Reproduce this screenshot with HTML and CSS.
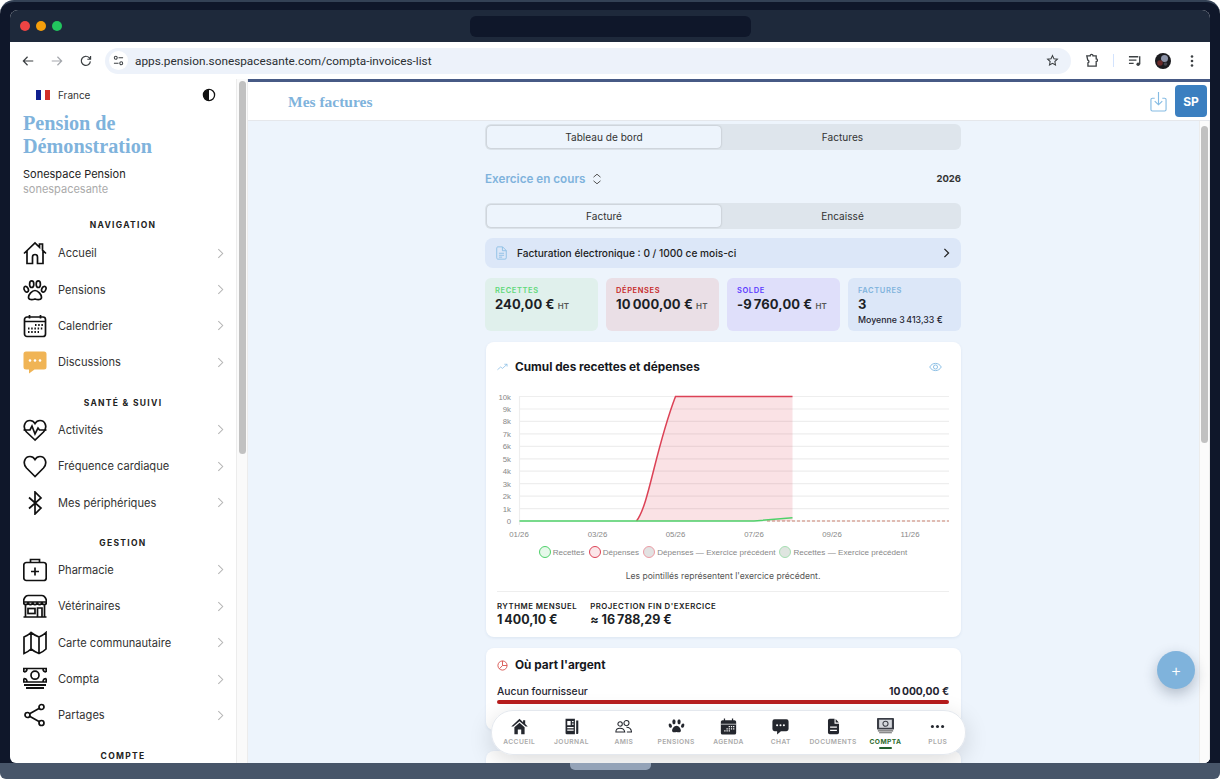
FILE: index.html
```html
<!DOCTYPE html>
<html lang="fr">
<head>
  <meta charset="UTF-8">
  <title>Mes factures</title>
  <link rel="stylesheet" href="styles.css">
</head>
<body>
  <div class="laptop">
    <div class="screen">
      <div class="titlebar">
        <span class="light red"></span>
        <span class="light amber"></span>
        <span class="light green"></span>
        <div class="notch"></div>
      </div>

      <div class="toolbar">
        <svg class="tb-icon" viewBox="0 0 16 16"><path d="M14 8H3M7.500 3.200 2.700 8l4.800 4.800"/></svg>
        <svg class="tb-icon off" viewBox="0 0 16 16"><path d="M2 8h11M8.500 3.200 13.300 8l-4.800 4.800"/></svg>
        <svg class="tb-icon" viewBox="0 0 16 16"><path d="M13 8.400A5.200 5.200 0 1 1 11.600 4.200L13.200 6M13.200 2.200V6H9.500"/></svg>
        <div class="omnibox">
          <span class="tune">
            <svg viewBox="0 0 12 12"><circle cx="3" cy="3" r="1.600"/><path d="M6 3h5M1 9h5"/><circle cx="9" cy="9" r="1.600"/></svg>
          </span>
          <span class="url">apps.pension.sonespacesante.com/compta-invoices-list</span>
          <svg class="star" viewBox="0 0 16 16"><path d="m8 2 1.800 3.900 4.200.5-3.100 2.900.8 4.200L8 11.400l-3.700 2.100.8-4.200L2 6.400l4.200-.5z"/></svg>
        </div>
        <svg class="tb-icon ext" viewBox="0 0 16 16"><path d="M3 3h3.600c0-2 3-2 3 0H13v3.200c1.800 0 1.800 3 0 3V14H4.200V10.500c1.400 0 1.400-3-.2-3z"/></svg>
        <span class="tb-sep"></span>
        <svg class="tb-icon queue" viewBox="0 0 16 16"><path d="M1 4h10M1 7.500h8M1 11h5M12.500 3.500V12"/><circle class="solid" cx="10.800" cy="12" r="1.800"/></svg>
        <svg class="avatar" viewBox="0 0 16 16"><circle cx="8" cy="8" r="8" fill="#1b1b1f"/><circle cx="9.500" cy="5.500" r="3.500" fill="#8c93a8"/><circle cx="5" cy="10" r="2.800" fill="#6a2b2b"/><circle cx="10.500" cy="11" r="1.800" fill="#45464f"/></svg>
        <svg class="dots" viewBox="0 0 4 16"><circle cx="2" cy="3.500" r="1.300"/><circle cx="2" cy="8" r="1.300"/><circle cx="2" cy="12.500" r="1.300"/></svg>
      </div>

      <div class="app">
        <aside class="sidebar">
          <div class="side-inner">
            <div class="locale">
              <span class="flag"><i class="f-blue"></i><i class="f-white"></i><i class="f-red"></i></span>
              <span class="locale-name">France</span>
              <svg class="contrast" viewBox="0 0 14 14"><circle cx="7" cy="7" r="5.600"/><path class="solid" d="M7 1.400a5.600 5.600 0 0 0 0 11.200z"/></svg>
            </div>
            <h2 class="brand">Pension de Démonstration</h2>
            <div class="owner">Sonespace Pension</div>
            <div class="owner-sub">sonespacesante</div>

            <div class="side-title first">NAVIGATION</div>
            <a class="side-item">
              <svg class="side-icon" viewBox="0 0 24 24"><path d="M1 12.500 12 2l4.500 4.300V3h3v6.200l3.500 3.300M4 10v12.500h5.500v-6.500a2.500 2.500 0 0 1 5 0v6.500H20V10"/></svg>
              <span>Accueil</span><svg class="chev" viewBox="0 0 8 12"><path d="m1.500 1 5 5-5 5"/></svg>
            </a>
            <a class="side-item">
              <svg class="side-icon" viewBox="0 0 24 24"><path d="M12 12.500c-3 0-6.500 4-6.500 6.700 0 2.800 3.500 2.700 6.500 1.800 3 .9 6.500 1 6.500-1.800 0-2.700-3.500-6.700-6.500-6.700z"/><ellipse cx="8.700" cy="6.200" rx="2.100" ry="3.300"/><ellipse cx="15.300" cy="6.200" rx="2.100" ry="3.300"/><ellipse cx="3.200" cy="11.200" rx="2" ry="3" transform="rotate(-24 3.200 11.200)"/><ellipse cx="20.800" cy="11.200" rx="2" ry="3" transform="rotate(24 20.800 11.200)"/></svg>
              <span>Pensions</span><svg class="chev" viewBox="0 0 8 12"><path d="m1.500 1 5 5-5 5"/></svg>
            </a>
            <a class="side-item">
              <svg class="side-icon" viewBox="0 0 24 24"><rect x="1.500" y="3" width="21" height="19.500" rx="2.500"/><path d="M1.500 7.500h21M6.500 1v3.500M17.500 1v3.500"/><path class="dotted" d="M12 11h8.500M5 14.500h15.500M5 18h11"/></svg>
              <span>Calendrier</span><svg class="chev" viewBox="0 0 8 12"><path d="m1.500 1 5 5-5 5"/></svg>
            </a>
            <a class="side-item">
              <svg class="side-icon" viewBox="0 0 24 24"><path class="chat-fill" d="M3 1.500h18A2.500 2.500 0 0 1 23.500 4v13a2.500 2.500 0 0 1-2.500 2.500H11.500L6 23.500v-4H3A2.500 2.500 0 0 1 .5 17V4A2.500 2.500 0 0 1 3 1.500z"/><circle class="chat-dot" cx="7" cy="10.500" r="1.300"/><circle class="chat-dot" cx="12" cy="10.500" r="1.300"/><circle class="chat-dot" cx="17" cy="10.500" r="1.300"/></svg>
              <span>Discussions</span><svg class="chev" viewBox="0 0 8 12"><path d="m1.500 1 5 5-5 5"/></svg>
            </a>

            <div class="side-title">SANTÉ &amp; SUIVI</div>
            <a class="side-item">
              <svg class="side-icon" viewBox="0 0 24 24"><path d="M12 22 3.500 14C-1 9 2 2.500 7 2.500c2.200 0 3.800 1 5 3 1.200-2 2.800-3 5-3 5 0 8 6.500 3.500 11.500z"/><path d="M.5 12h6.500l2-4 3 8 3-6 1.500 2h7"/></svg>
              <span>Activités</span><svg class="chev" viewBox="0 0 8 12"><path d="m1.500 1 5 5-5 5"/></svg>
            </a>
            <a class="side-item">
              <svg class="side-icon" viewBox="0 0 24 24"><path d="M12 22.500 3.500 14C-1 9 2 2.500 7 2.500c2.200 0 3.800 1 5 3 1.200-2 2.800-3 5-3 5 0 8 6.500 3.500 11.500z"/></svg>
              <span>Fréquence cardiaque</span><svg class="chev" viewBox="0 0 8 12"><path d="m1.500 1 5 5-5 5"/></svg>
            </a>
            <a class="side-item">
              <svg class="side-icon" viewBox="0 0 24 24"><path d="M6 6.500 18 17l-6 6V1l6 6L6 17.500"/></svg>
              <span>Mes périphériques</span><svg class="chev" viewBox="0 0 8 12"><path d="m1.500 1 5 5-5 5"/></svg>
            </a>

            <div class="side-title">GESTION</div>
            <a class="side-item">
              <svg class="side-icon" viewBox="0 0 24 24"><rect x=".8" y="4.500" width="22.400" height="18" rx="2.500"/><path d="M7.500 4.500V1.500h9v3M12 9.500v8M8 13.500h8"/></svg>
              <span>Pharmacie</span><svg class="chev" viewBox="0 0 8 12"><path d="m1.500 1 5 5-5 5"/></svg>
            </a>
            <a class="side-item">
              <svg class="side-icon" viewBox="0 0 24 24"><path d="M5 1.500h14c2.500 0 4.500 3 4.500 6.500h-23C.5 4.500 2.500 1.500 5 1.500zM.5 8c0 3.500 4.600 3.500 4.600 0 0 3.500 4.600 3.500 4.600 0 0 3.500 4.600 3.500 4.600 0 0 3.500 4.600 3.500 4.600 0 0 3.500 4.600 3.500 4.600 0M2.500 11.500v11M21.500 11.500v11M.5 23h23"/><rect x="5" y="14.500" width="7" height="5"/><path d="M14.500 23v-9h4.500v9"/></svg>
              <span>Vétérinaires</span><svg class="chev" viewBox="0 0 8 12"><path d="m1.500 1 5 5-5 5"/></svg>
            </a>
            <a class="side-item">
              <svg class="side-icon" viewBox="0 0 24 24"><path d="M1 6c2.500-1 5-2.500 7-4.500 2.500 2 5.500 3.500 8 4.500 2.500-1 5-2.500 7-4.500V18c-2 2-4.500 3.500-7 4.500-2.500-1-5.500-2.500-8-4.500-2 2-4.500 3.500-7 4.500zM8 1.500V18M16 6v16.500"/></svg>
              <span>Carte communautaire</span><svg class="chev" viewBox="0 0 8 12"><path d="m1.500 1 5 5-5 5"/></svg>
            </a>
            <a class="side-item">
              <svg class="side-icon" viewBox="0 0 24 24"><path d="M4 1.500H.8V5M20 1.500h3.200V5M4 15H.8v-3.500M20 15h3.200v-3.500M4 1.500c0 2-1 3.500-3.200 3.500M20 1.500c0 2 1 3.500 3.200 3.500M4 15c0-2-1-3.500-3.200-3.500M20 15c0-2 1-3.500 3.200-3.500M4 1.500h16M4 15h16"/><circle cx="12" cy="8.200" r="4"/><path class="thick" d="M1 18h22M3 21h18"/></svg>
              <span>Compta</span><svg class="chev" viewBox="0 0 8 12"><path d="m1.500 1 5 5-5 5"/></svg>
            </a>
            <a class="side-item">
              <svg class="side-icon" viewBox="0 0 24 24"><circle cx="18.500" cy="4" r="2.500"/><circle cx="4.500" cy="12" r="2.500"/><circle cx="18.500" cy="20" r="2.500"/><path d="M16.400 5.300 6.600 10.700M6.600 13.300l9.800 5.400"/></svg>
              <span>Partages</span><svg class="chev" viewBox="0 0 8 12"><path d="m1.500 1 5 5-5 5"/></svg>
            </a>

            <div class="side-title">COMPTE</div>
          </div>
          <div class="scroll side-scroll"><span class="thumb"></span></div>
        </aside>

        <main class="main">
          <header class="topbar">
            <h1>Mes factures</h1>
            <svg class="dl" viewBox="0 0 18 22"><path d="M5 7.500H2.500A1.500 1.500 0 0 0 1 9v10.500A1.500 1.500 0 0 0 2.500 21h13a1.500 1.500 0 0 0 1.500-1.500V9a1.500 1.500 0 0 0-1.500-1.500H13M9 1v13M5 10.500l4 4 4-4"/></svg>
            <button class="sp">SP</button>
          </header>

          <div class="main-body">
            <div class="content">
              <div class="column">
                <div class="seg">
                  <span class="seg-on">Tableau de bord</span>
                  <span>Factures</span>
                </div>

                <div class="period">
                  <span class="period-name">Exercice en cours</span>
                  <svg class="updown" viewBox="0 0 10 12"><path d="m1.500 4.200 3.500-3 3.500 3M1.500 7.800l3.500 3 3.500-3"/></svg>
                  <span class="period-year">2026</span>
                </div>

                <div class="seg">
                  <span class="seg-on">Facturé</span>
                  <span>Encaissé</span>
                </div>

                <div class="einvoice">
                  <svg class="doc" viewBox="0 0 12 15"><path d="M1.800.8h5.400l4 4v8a1.400 1.400 0 0 1-1.400 1.400H1.800A1.400 1.400 0 0 1 .8 12.800V2.200A1.400 1.400 0 0 1 1.800.8zM7 1v4h4M3.200 7.800h5.600M3.200 10h5.600M3.200 12h3.500"/></svg>
                  <span>Facturation électronique : 0 / 1000 ce mois-ci</span>
                  <svg class="einvoice-chev" viewBox="0 0 8 12"><path d="m1.500 1 5 5-5 5"/></svg>
                </div>

                <div class="kpis">
                  <div class="kpi k-green">
                    <div class="kpi-label">RECETTES</div>
                    <div class="kpi-value">240,00 € <small>HT</small></div>
                  </div>
                  <div class="kpi k-red">
                    <div class="kpi-label">DÉPENSES</div>
                    <div class="kpi-value">10&#8239;000,00 € <small>HT</small></div>
                  </div>
                  <div class="kpi k-violet">
                    <div class="kpi-label">SOLDE</div>
                    <div class="kpi-value">-9&#8239;760,00 € <small>HT</small></div>
                  </div>
                  <div class="kpi k-blue">
                    <div class="kpi-label">FACTURES</div>
                    <div class="kpi-value">3</div>
                    <div class="kpi-note">Moyenne 3&#8239;413,33 €</div>
                  </div>
                </div>

                <section class="card chart-card">
                  <div class="card-head">
                    <svg class="head-icon trend" viewBox="0 0 12 8"><path d="M.5 7 4 4l2 1.500L11 1M8 1h3v2.500"/></svg>
                    <h3>Cumul des recettes et dépenses</h3>
                    <svg class="eye" viewBox="0 0 14 10"><path d="M.8 5C3.500-.2 10.500-.2 13.200 5 10.500 10.200 3.500 10.200.8 5z"/><circle cx="7" cy="5" r="2.200"/></svg>
                  </div>

                  <svg class="chart" viewBox="0 0 452 155" width="452" height="155">
                    <g class="grid">
                      <path d="M22 6.500h430M22 19h430M22 31.400h430M22 43.900h430M22 56.300h430M22 68.800h430M22 81.200h430M22 93.700h430M22 106.100h430M22 118.600h430M22 131h430"/>
                      <path d="M22.500 6v129"/>
                    </g>
                    <g class="y-labels">
                      <text x="14" y="9.500">10k</text>
                      <text x="14" y="22">9k</text>
                      <text x="14" y="34.400">8k</text>
                      <text x="14" y="46.900">7k</text>
                      <text x="14" y="59.300">6k</text>
                      <text x="14" y="71.800">5k</text>
                      <text x="14" y="84.200">4k</text>
                      <text x="14" y="96.700">3k</text>
                      <text x="14" y="109.100">2k</text>
                      <text x="14" y="121.600">1k</text>
                      <text x="14" y="134">0</text>
                    </g>
                    <path class="area" d="M139.500 131C152 115 158 60 178.500 6.500H295.500V131z"/>
                    <path class="line-red" d="M139.500 131C152 115 158 60 178.500 6.500H295.500"/>
                    <path class="line-prev" d="M270 131H452"/>
                    <path class="line-green" d="M22.500 131H257L295.500 127.800"/>
                    <g class="x-labels">
                      <text x="22" y="147">01/26</text>
                      <text x="100.500" y="147">03/26</text>
                      <text x="178.500" y="147">05/26</text>
                      <text x="257" y="147">07/26</text>
                      <text x="335" y="147">09/26</text>
                      <text x="413" y="147">11/26</text>
                    </g>
                  </svg>

                  <div class="legend">
                    <span class="leg"><i class="dot d-green"></i>Recettes</span>
                    <span class="leg"><i class="dot d-red"></i>Dépenses</span>
                    <span class="leg"><i class="dot d-red-prev"></i>Dépenses — Exercice précédent</span>
                    <span class="leg"><i class="dot d-green-prev"></i>Recettes — Exercice précédent</span>
                  </div>
                  <p class="chart-note">Les pointillés représentent l'exercice précédent.</p>

                  <div class="stats">
                    <div>
                      <div class="stat-label">RYTHME MENSUEL</div>
                      <div class="stat-value">1&#8239;400,10 €</div>
                    </div>
                    <div>
                      <div class="stat-label">PROJECTION FIN D'EXERCICE</div>
                      <div class="stat-value">≈ 16&#8239;788,29 €</div>
                    </div>
                  </div>
                </section>

                <section class="card money-card">
                  <div class="card-head">
                    <svg class="head-icon pie" viewBox="0 0 12 12"><circle cx="6" cy="6" r="5"/><path d="M6 1v5l-3.400 3.600M6 6h5"/></svg>
                    <h3>Où part l'argent</h3>
                  </div>
                  <div class="money-row">
                    <span>Aucun fournisseur</span>
                    <b>10&#8239;000,00 €</b>
                  </div>
                  <div class="money-bar"></div>
                </section>

                <section class="card next-card"></section>
              </div>
            </div>
            <div class="scroll main-scroll"><span class="thumb"></span></div>
          </div>

          <nav class="bottom-nav">
            <a class="nav-item">
              <svg viewBox="0 0 20 20"><path class="solid" d="M10 1 .3 10h2.400L10 3.700l7.300 6.300h2.400l-3-2.800V2.500h-2.500v2.400z"/><path class="solid" d="m4 10.800 6-5.200 6 5.200v8.200h-4v-5.500H8V19H4z"/></svg>
              <span>ACCUEIL</span>
            </a>
            <a class="nav-item">
              <svg viewBox="0 0 20 20"><path class="solid" fill-rule="evenodd" d="M3 1h11v18H4.500A1.500 1.500 0 0 1 3 17.500zM5 3.500v5h4v-5zM10.500 3.500V5H12.500V3.500zM10.500 6.500V8H12.500V6.500zM5 10.500V12h7.500v-1.500zM5 13.500V15h7.500v-1.500z"/><path class="solid" d="M15.500 3H18v14.500a1.500 1.500 0 0 1-2.500 1z"/></svg>
              <span>JOURNAL</span>
            </a>
            <a class="nav-item">
              <svg class="nav-outline" viewBox="0 0 20 20"><circle cx="6" cy="7" r="2.600"/><circle cx="13.500" cy="6" r="3"/><path d="M1 16.500c0-6 9.500-6 10.500 0zM13.500 11c3 0 5.500 1.800 6 5.500h-5.500"/></svg>
              <span>AMIS</span>
            </a>
            <a class="nav-item">
              <svg viewBox="0 0 20 20"><path class="solid" d="M10 9c-2.800 0-5.200 3.600-5.200 5.800 0 2.600 3 2.300 5.200 1.600 2.200.7 5.200 1 5.200-1.600C15.200 12.600 12.800 9 10 9z"/><ellipse class="solid" cx="7" cy="4.500" rx="1.900" ry="3"/><ellipse class="solid" cx="13" cy="4.500" rx="1.900" ry="3"/><ellipse class="solid" cx="2.700" cy="9" rx="1.800" ry="2.600" transform="rotate(-22 2.700 9)"/><ellipse class="solid" cx="17.300" cy="9" rx="1.800" ry="2.600" transform="rotate(22 17.300 9)"/></svg>
              <span>PENSIONS</span>
            </a>
            <a class="nav-item">
              <svg viewBox="0 0 20 20"><path class="solid" d="M4.500.5H6V2.500h8V.5h1.500V2.500h1.500A2 2 0 0 1 19 4.500v13a2 2 0 0 1-2 2H3a2 2 0 0 1-2-2v-13a2 2 0 0 1 2-2h1.500z"/><path class="hole-line thin" d="M1 7.300h18"/><path class="hole-sq" d="M10.200 9.500h1.500V11h-1.500zM12.800 9.500h1.500V11h-1.500zM15.400 9.500h1.500V11h-1.500zM7.600 12h1.500v1.500H7.600zM10.200 12h1.500v1.500h-1.500zM12.800 12h1.500v1.500h-1.500zM15.400 12h1.500v1.500h-1.500zM5 14.500h1.500V16H5zM7.600 14.500h1.500V16H7.600zM10.200 14.500h1.500V16h-1.500z"/></svg>
              <span>AGENDA</span>
            </a>
            <a class="nav-item">
              <svg viewBox="0 0 20 20"><path class="solid" d="M3 1.500h14a2.500 2.500 0 0 1 2.500 2.500v9a2.500 2.500 0 0 1-2.500 2.500h-6.500L6 19.500v-4H3A2.500 2.500 0 0 1 .5 13V4A2.500 2.500 0 0 1 3 1.500z"/><circle class="hole" cx="6" cy="8.500" r="1.200"/><circle class="hole" cx="10" cy="8.500" r="1.200"/><circle class="hole" cx="14" cy="8.500" r="1.200"/></svg>
              <span>CHAT</span>
            </a>
            <a class="nav-item">
              <svg viewBox="0 0 20 20"><path class="solid" d="M5.500 1h5.700v5.800h5.300V17a2 2 0 0 1-2 2h-9a2 2 0 0 1-2-2V3a2 2 0 0 1 2-2zM12.500 1.300l3.800 4.100h-3.800z"/><path class="hole-line" d="M6 10.800h8M6 14.500h8"/></svg>
              <span>DOCUMENTS</span>
            </a>
            <a class="nav-item on">
              <svg class="cash" viewBox="0 0 20 20"><rect class="solid" x="0" y="0" width="20" height="13.500" rx="1"/><rect class="cash-in" x="2.500" y="2" width="15" height="9.500"/><circle class="cash-ring" cx="10" cy="6.800" r="3"/><path class="cash-low" d="M1 15.200h18M2.500 17.400h15"/></svg>
              <span>COMPTA</span>
            </a>
            <a class="nav-item">
              <svg viewBox="0 0 20 20"><circle class="solid" cx="4" cy="10" r="1.800"/><circle class="solid" cx="10" cy="10" r="1.800"/><circle class="solid" cx="16" cy="10" r="1.800"/></svg>
              <span>PLUS</span>
            </a>
          </nav>

          <button class="fab">+</button>
        </main>
      </div>
    </div>
  </div>
  <div class="base"><span class="handle"></span></div>
</body>
</html>
```

FILE: styles.css
```css
* {
  box-sizing: border-box;
  margin: 0;
  padding: 0;
}

html, body {
  height: 100%;
  background: #fff;
  overflow: hidden;
  font-family: 'Inter', 'Liberation Sans', sans-serif;
  color: #1f2430;
}

svg {
  fill: none;
  stroke: currentColor;
  flex-shrink: 0;
}

.solid {
  fill: currentColor;
  stroke: none;
}

/* laptop frame */
.laptop {
  height: 763px;
  background: #0f172a;
  border-top: 2px solid #334155;
  border-radius: 14px 14px 0 0;
  padding: 8px 10px 0;
}

.screen {
  height: 100%;
  display: flex;
  flex-direction: column;
  border-radius: 8px 8px 6px 6px;
  overflow: hidden;
  background: #fff;
}

.base {
  height: 16px;
  background: #475569;
  border-radius: 0 0 6px 6px;
  display: flex;
  justify-content: center;
}

.handle {
  width: 81px;
  height: 7px;
  background: #94a3b8;
  border-radius: 0 0 5px 5px;
}

.titlebar {
  height: 32px;
  background: #1e293b;
  display: flex;
  align-items: center;
  gap: 6px;
  padding: 0 0 0 10px;
  position: relative;
}

.light {
  width: 10px;
  height: 10px;
  border-radius: 50%;
}

.red { background: #ef4444; }
.amber { background: #f59e0b; }
.green { background: #22c55e; }

.notch {
  position: absolute;
  left: 460px;
  top: 6px;
  width: 281px;
  height: 21px;
  background: #0f172a;
  border-radius: 6px;
}

/* browser toolbar */
.toolbar {
  height: 37px;
  background: #fff;
  display: flex;
  align-items: center;
  padding: 0 0 0 11px;
  color: #3c4043;
}

.tb-icon {
  width: 14px;
  height: 14px;
  margin-right: 15px;
  stroke-width: 1.400;
}

.tb-icon.off {
  color: #a5a8ad;
}

.omnibox {
  width: 966px;
  height: 26px;
  margin-left: -3px;
  background: #edf2fa;
  border-radius: 13px;
  display: flex;
  align-items: center;
  padding: 0 12px 0 4px;
}

.tune {
  width: 19px;
  height: 19px;
  border-radius: 50%;
  background: #fff;
  display: flex;
  align-items: center;
  justify-content: center;
}

.tune svg {
  width: 11px;
  height: 11px;
  stroke-width: 1.100;
}

.url {
  margin-left: 7px;
  font-family: 'Roboto', sans-serif;
  font-size: 11.800px;
  color: #2b2f33;
  flex: 1;
}

.star {
  width: 13px;
  height: 13px;
  stroke-width: 1.300;
}

.tb-icon.ext {
  margin: 0 14px 0 13px;
  width: 15px;
  height: 15px;
}

.tb-sep {
  width: 1px;
  height: 13px;
  background: #d3e3fd;
  margin-right: 14px;
}

.tb-icon.queue {
  width: 15px;
  height: 15px;
  margin-right: 12px;
}

.avatar {
  width: 16px;
  height: 16px;
  stroke: none;
}

.dots {
  width: 4px;
  height: 16px;
  margin-left: 19px;
  fill: #3c4043;
  stroke: none;
}

/* app */
.app {
  flex: 1;
  min-height: 0;
  display: flex;
}

.sidebar {
  width: 238px;
  display: flex;
  overflow: hidden;
}

.side-inner {
  width: 226px;
  padding: 9px 10px 0 13px;
}

.scroll {
  width: 12px;
  flex-shrink: 0;
  background: #fafafa;
  border-left: 1px solid #ececec;
  border-right: 1px solid #ececec;
}

.thumb {
  display: block;
  width: 7px;
  background: #c1c1c1;
  border-radius: 4px;
}

.side-scroll .thumb {
  height: 373px;
  margin: 2px 0 0 2px;
}

.locale {
  display: flex;
  align-items: center;
  height: 14px;
  padding-left: 13px;
}

.flag {
  display: flex;
  width: 14px;
  height: 10px;
}

.flag i {
  flex: 1;
}

.f-blue { background: #10208f; }
.f-white { background: #fff; }
.f-red { background: #d22f27; }

.locale-name {
  font-size: 10px;
  margin-left: 8px;
  color: #333;
  flex: 1;
}

.contrast {
  width: 14px;
  height: 14px;
  margin-right: 10px;
  stroke-width: 1.300;
  color: #111;
}

.brand {
  font-family: 'Liberation Serif', serif;
  font-size: 20.200px;
  line-height: 23px;
  color: #7fb3dc;
  margin-top: 10px;
  width: 150px;
}

.owner {
  font-size: 11px;
  line-height: 15px;
  margin-top: 9px;
  color: #222;
}

.owner-sub {
  font-size: 11px;
  line-height: 14px;
  color: #aaa;
}

.side-title {
  font-size: 8.500px;
  font-weight: 700;
  letter-spacing: 1.300px;
  text-align: center;
  line-height: 11px;
  padding: 17px 3px 3px 0;
  color: #222;
}

.side-title.first {
  padding: 24px 3px 4px 0;
}

.side-item {
  display: flex;
  align-items: center;
  height: 36.400px;
  font-size: 11.100px;
  color: #333;
}

.side-icon {
  width: 24px;
  height: 24px;
  margin-right: 11px;
  color: #111;
  stroke-width: 1.700;
}

.side-item span {
  flex: 1;
}

.chev {
  width: 7px;
  height: 11px;
  margin-right: 2px;
  color: #b5b5b5;
  stroke-width: 1.200;
}

.dotted {
  stroke-width: 2;
  stroke-dasharray: 1.500 1.700;
}

.thick {
  stroke-width: 2;
}

.chat-fill {
  fill: #f0b455;
  stroke: none;
}

.chat-dot {
  fill: #fff;
  stroke: none;
}

/* main */
.main {
  flex: 1;
  min-width: 0;
  position: relative;
  display: flex;
  flex-direction: column;
  border-top: 3px solid #475a85;
  background: #edf4fc;
}

.topbar {
  height: 39px;
  background: #fff;
  border-bottom: 1px solid #e5e7eb;
  display: flex;
  align-items: center;
  padding: 0 3px 0 40px;
}

.topbar h1 {
  font-family: 'Liberation Serif', serif;
  font-size: 15.500px;
  padding-top: 1px;
  color: #7fb3dc;
  flex: 1;
}

.dl {
  width: 17px;
  height: 21px;
  color: #85bbe3;
  stroke-width: 1.200;
  margin-right: 8px;
}

.sp {
  width: 32px;
  height: 32px;
  border: none;
  border-radius: 4px;
  background: #3b7fc0;
  color: #fff;
  font-family: 'Inter', sans-serif;
  font-size: 12px;
  font-weight: 700;
}

.main-body {
  flex: 1;
  min-height: 0;
  display: flex;
}

.content {
  flex: 1;
  overflow: hidden;
  padding-top: 3px;
}

.main-scroll .thumb {
  height: 317px;
  margin: 5px 0 0 1px;
}

.main-scroll {
  width: 11px;
  background: #fbfbfb;
}

.column {
  width: 476px;
  margin-left: 237px;
}

.seg {
  height: 26px;
  padding: 2px 0 2px 2px;
  background: #dee5ec;
  border-radius: 6px;
  display: grid;
  grid-template-columns: 234px 1fr;
  font-size: 10.100px;
  color: #333;
}

.seg span {
  display: flex;
  align-items: center;
  justify-content: center;
  padding-left: 3px;
  border-radius: 4px;
}

.seg .seg-on {
  padding-left: 0;
  background: #edf4fc;
  box-shadow: 0 0 2px rgba(0, 0, 0, 0.25);
}

.period {
  height: 53px;
  padding-top: 4px;
  display: flex;
  align-items: center;
}

.period-name {
  font-size: 11.700px;
  font-weight: 600;
  color: #7fb3dc;
}

.updown {
  width: 10px;
  height: 12px;
  margin-left: 7px;
  color: #555;
  stroke-width: 1;
}

.period-year {
  margin-left: auto;
  font-size: 9.500px;
  font-weight: 700;
  color: #333;
}

.einvoice {
  height: 30px;
  margin-top: 9px;
  background: #dce7f8;
  border-radius: 8px;
  display: flex;
  align-items: center;
  padding: 0 11px;
  font-size: 10.150px;
  font-weight: 500;
  color: #222;
}

.doc {
  width: 11px;
  height: 14px;
  margin-right: 10px;
  color: #85bbe3;
  stroke-width: .9;
}

.einvoice span {
  flex: 1;
}

.einvoice-chev {
  width: 7px;
  height: 10px;
  color: #222;
  stroke-width: 1.500;
}

.kpis {
  display: grid;
  grid-template-columns: repeat(4, 1fr);
  gap: 8px;
  margin-top: 10px;
}

.kpi {
  height: 53px;
  border-radius: 6px;
  padding: 8px 10px;
}

.k-green { background: #e0f0ec; }
.k-red { background: #eadfe6; }
.k-violet { background: #dfdffa; }
.k-blue { background: #dce7f8; }

.kpi-label {
  font-size: 7.500px;
  line-height: 9px;
  font-weight: 600;
  letter-spacing: .6px;
}

.k-green .kpi-label { color: #5fd97a; }
.k-red .kpi-label { color: #c62828; }
.k-violet .kpi-label { color: #5b3bff; }
.k-blue .kpi-label { color: #7fb3dc; }

.kpi-value {
  font-size: 13px;
  line-height: 16px;
  margin-top: 1px;
  font-weight: 700;
  letter-spacing: .1px;
  color: #1c1f26;
  white-space: nowrap;
}

.kpi-value small {
  font-size: 8px;
  font-weight: 600;
  color: #555;
}

.kpi-note {
  font-size: 8.800px;
  font-weight: 500;
  margin-top: 2px;
  white-space: nowrap;
}

.card {
  background: #fff;
  border-radius: 8px;
  box-shadow: 0 1px 3px rgba(30, 60, 110, 0.08);
}

.chart-card {
  height: 295px;
  margin: 11px 0 0 1px;
  padding: 0 12px 0 11px;
}

.card-head {
  display: flex;
  align-items: center;
  height: 50px;
}

.card-head h3 {
  font-size: 11.800px;
  font-weight: 700;
  color: #16181d;
  flex: 1;
}

.head-icon {
  width: 11px;
  height: 8px;
  margin-right: 7px;
  stroke-width: .8;
}

.trend {
  color: #85bbe3;
}

.pie {
  height: 11px;
  color: #d9534f;
  stroke-width: 1;
}

.eye {
  width: 13px;
  height: 10px;
  margin-right: 7px;
  color: #85bbe3;
  stroke-width: 1;
}

.chart {
  display: block;
  margin-top: -2.500px;
  stroke: none;
}

.grid path {
  stroke: #eeeeee;
  stroke-width: 1.200;
}

.y-labels text {
  text-anchor: end;
}

.x-labels text {
  text-anchor: middle;
}

.chart text {
  font-family: 'Liberation Sans', sans-serif;
  font-size: 7.800px;
  fill: #888;
  stroke: none;
}

.area {
  fill: rgba(220, 60, 80, 0.15);
}

.line-red {
  stroke: #dc4256;
  stroke-width: 1.500;
}

.line-prev {
  stroke: #c9806f;
  stroke-width: 1;
  stroke-dasharray: 3 2;
}

.line-green {
  stroke: #4fd16a;
  stroke-width: 1.500;
}

.legend {
  display: flex;
  justify-content: center;
  gap: 4px;
  margin-top: 1.500px;
  font-family: 'Liberation Sans', sans-serif;
  font-size: 8.100px;
  color: #888;
}

.leg {
  display: flex;
  align-items: center;
  gap: 2px;
  white-space: nowrap;
}

.dot {
  width: 12px;
  height: 12px;
  border-radius: 50%;
  border: 1.500px solid;
  flex-shrink: 0;
}

.d-green { border-color: #4fd16a; background: #e6f8ea; }
.d-red { border-color: #dc4256; background: #fbe6e9; }
.d-red-prev { border-color: #ec9ca5; background: #e2e2e2; border-width: 1px; }
.d-green-prev { border-color: #a5dfb1; background: #dfe5e0; border-width: 1px; }

.chart-note {
  text-align: center;
  font-size: 8.600px;
  color: #555;
  margin-top: 13px;
  line-height: 11px;
}

.stats {
  display: flex;
  gap: 13px;
  border-top: 1px solid #eeeeee;
  margin-top: 9px;
  padding-top: 10px;
}

.stat-label {
  font-size: 7.800px;
  line-height: 9px;
  font-weight: 600;
  letter-spacing: .5px;
  color: #222;
}

.stat-value {
  font-size: 12.500px;
  line-height: 16px;
  margin-top: 1px;
  font-weight: 700;
  letter-spacing: .5px;
  color: #1c1f26;
}

.money-card {
  height: 82px;
  margin: 11px 0 0 1px;
  padding: 0 12px 0 11px;
}

.money-card .card-head {
  height: 34px;
}

.money-row {
  display: flex;
  justify-content: space-between;
  align-items: center;
  height: 18px;
  font-size: 10.300px;
  font-weight: 500;
}

.money-row b {
  font-weight: 700;
  letter-spacing: .6px;
}

.money-bar {
  height: 4px;
  background: #b71c1c;
  border-radius: 2px;
}

.next-card {
  height: 60px;
  margin: 21px 0 0 1px;
}

/* things lying over the page */
.bottom-nav {
  position: absolute;
  left: 243px;
  bottom: 8px;
  width: 475px;
  height: 45px;
  background: rgba(255, 255, 255, 0.97);
  border: 1px solid #e4e8ee;
  border-radius: 22px;
  box-shadow: 0 6px 24px rgba(0, 0, 0, 0.14);
  display: flex;
  padding: 0 1px;
}

.nav-item {
  flex: 1;
  min-width: 0;
  position: relative;
  display: flex;
  flex-direction: column;
  align-items: center;
  padding-top: 7px;
  font-size: 6.700px;
  font-weight: 600;
  letter-spacing: .4px;
  color: #aaa;
  white-space: nowrap;
}

.nav-item svg {
  width: 17px;
  height: 17px;
  color: #24272e;
  margin-bottom: 3px;
}

.nav-outline {
  stroke-width: 1.200;
}

.hole {
  fill: #fff;
  stroke: none;
}

.hole-line {
  stroke: #fff;
  stroke-width: 1.600;
}

.hole-line.thin {
  stroke-width: .8;
}

.hole-sq {
  fill: #fff;
  stroke: none;
}

.nav-item.on {
  color: #2e6b2e;
  font-weight: 700;
}

.nav-item.on::after {
  content: "";
  position: absolute;
  left: 50%;
  top: 36px;
  width: 13px;
  height: 2px;
  margin-left: -6px;
  background: #1f5f2a;
  border-radius: 1px;
}

.nav-item .cash {
  color: #3a3d45;
}

.cash-in {
  fill: #d5d8dd;
  stroke: none;
}

.cash-ring {
  stroke: #3a3d45;
  stroke-width: 1.200;
}

.cash-low {
  stroke: #666;
  stroke-width: 1.300;
}

.fab {
  position: absolute;
  right: 15px;
  bottom: 74px;
  width: 38px;
  height: 38px;
  border: none;
  border-radius: 50%;
  background: #7fb3dc;
  color: #fff;
  font-family: 'Inter', sans-serif;
  font-size: 17px;
  font-weight: 300;
  box-shadow: 0 5px 14px rgba(20, 40, 70, 0.28);
}
```
